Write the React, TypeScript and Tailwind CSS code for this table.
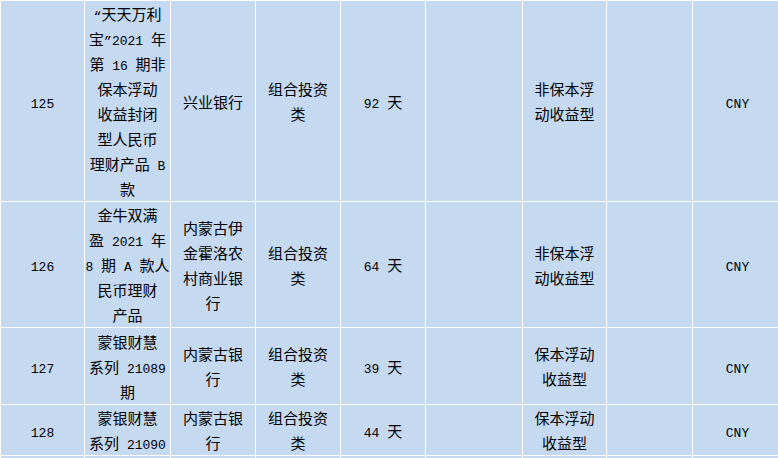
import React from "react";

type Row = { id: string; h: string; cells: string[][] };

const rows: Row[] = [
  {
    id: "125",
    h: "h-[201px]",
    cells: [
      ["“天天万利", "宝”2021 年", "第 16 期非", "保本浮动", "收益封闭", "型人民币", "理财产品 B", "款"],
      ["兴业银行"],
      ["组合投资", "类"],
      ["92 天"],
      [],
      ["非保本浮", "动收益型"],
      [],
      ["CNY"],
    ],
  },
  {
    id: "126",
    h: "h-[126px]",
    cells: [
      ["金牛双满", "盈 2021 年", "8 期 A 款人", "民币理财", "产品"],
      ["内蒙古伊", "金霍洛农", "村商业银", "行"],
      ["组合投资", "类"],
      ["64 天"],
      [],
      ["非保本浮", "动收益型"],
      [],
      ["CNY"],
    ],
  },
  {
    id: "127",
    h: "h-[77px]",
    cells: [
      ["蒙银财慧", "系列 21089", "期"],
      ["内蒙古银", "行"],
      ["组合投资", "类"],
      ["39 天"],
      [],
      ["保本浮动", "收益型"],
      [],
      ["CNY"],
    ],
  },
  {
    id: "128",
    h: "h-[51px]",
    cells: [
      ["蒙银财慧", "系列 21090"],
      ["内蒙古银", "行"],
      ["组合投资", "类"],
      ["44 天"],
      [],
      ["保本浮动", "收益型"],
      [],
      ["CNY"],
    ],
  },
];

function Mixed({ text }: { text: string }) {
  const parts = text.split(/([\x00-\x7F“”]+)/).filter((p) => p.length > 0);
  return (
    <>
      {parts.map((p, i) =>
        /^[\x00-\x7F“”]+$/.test(p) ? (
          <span
            key={i}
            className="font-['Liberation_Mono',monospace] text-[13px] whitespace-pre"
          >
            {p}
          </span>
        ) : (
          <span key={i}>{p}</span>
        )
      )}
    </>
  );
}

function Cell({ lines }: { lines: string[] }) {
  return (
    <td className="border border-white p-0 align-middle text-center">
      {lines.map((l, i) => (
        <div key={i} className="leading-[25px] h-[25px] whitespace-nowrap">
          <Mixed text={l} />
        </div>
      ))}
    </td>
  );
}

export default function App() {
  return (
    <div className="w-[778px] h-[458px] overflow-hidden bg-[#c5d9f1]">
      <table className="table-fixed border-collapse w-[782px] bg-[#c5d9f1] text-black text-[15px] font-['Noto_Sans_CJK_SC',sans-serif]">
        <colgroup>
          <col className="w-[84px]" />
          <col className="w-[86px]" />
          <col className="w-[85px]" />
          <col className="w-[85px]" />
          <col className="w-[85px]" />
          <col className="w-[97px]" />
          <col className="w-[84px]" />
          <col className="w-[86px]" />
          <col className="w-[90px]" />
        </colgroup>
        <tbody>
          {rows.map((r) => (
            <tr key={r.id} className={r.h}>
              <Cell lines={[r.id]} />
              {r.cells.map((c, i) => (
                <Cell key={i} lines={c} />
              ))}
            </tr>
          ))}
          <tr className="h-[40px]">
            {Array.from({ length: 9 }).map((_, i) => (
              <td key={i} className="border border-white p-0" />
            ))}
          </tr>
        </tbody>
      </table>
    </div>
  );
}
